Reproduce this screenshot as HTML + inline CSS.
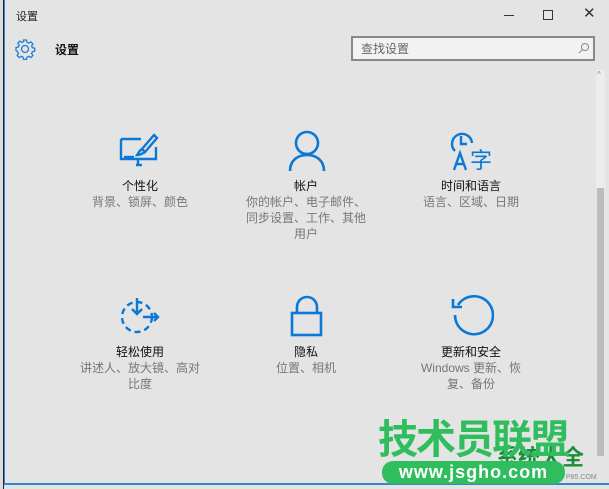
<!DOCTYPE html>
<html><head><meta charset="utf-8"><style>
*{margin:0;padding:0;box-sizing:border-box}
body{width:609px;height:489px;overflow:hidden;background:#e4e4e4;position:relative;font-family:"Liberation Sans","Noto Sans CJK SC",sans-serif}
.abs{position:absolute}
.item{position:absolute;width:160px;text-align:center}
.lab{font-size:12px;color:#111;line-height:16px}
.desc{font-size:12px;color:#777;line-height:16px}
svg{position:absolute}
</style></head><body>
<div class="abs" style="left:0;top:0;width:4px;height:489px;background:#dcdcdc"></div>
<div class="abs" style="left:3px;top:0;width:1px;height:489px;background:#1a2233"></div>
<div class="abs" style="left:4px;top:0;width:1px;height:484px;background:#3b82d0"></div>
<div class="abs" style="left:4px;top:483px;width:605px;height:2px;background:#3b82d0"></div>
<div class="abs" style="left:16px;top:8px;font-size:11px;color:#222">设置</div>
<div class="abs" style="left:504px;top:15px;width:10px;height:1px;background:#333"></div>
<div class="abs" style="left:543px;top:10px;width:10px;height:10px;border:1px solid #333"></div>
<div class="abs" style="left:583px;top:4px;font-size:15px;color:#333">✕</div>
<svg style="left:14px;top:38px" width="22" height="22" viewBox="0 0 22 22"><g fill="none" stroke="#1e7fd8" stroke-width="1.3"><circle cx="11" cy="11" r="3.5"/><path d="M9.5 2h3l.5 2.3 1.8.8 2-1.3 2.1 2.1-1.3 2 .8 1.8 2.3.5v3l-2.3.5-.8 1.8 1.3 2-2.1 2.1-2-1.3-1.8.8-.5 2.3h-3l-.5-2.3-1.8-.8-2 1.3-2.1-2.1 1.3-2-.8-1.8L2 12.5v-3l2.3-.5.8-1.8-1.3-2 2.1-2.1 2 1.3 1.8-.8z"/></g></svg>
<div class="abs" style="left:55px;top:41px;font-size:12px;font-weight:bold;color:#111">设置</div>
<div class="abs" style="left:351px;top:36px;width:244px;height:25px;border:2px solid #888;background:#f2f2f2"></div>
<div class="abs" style="left:361px;top:40px;font-size:12px;color:#666">查找设置</div>
<svg style="left:578px;top:42px" width="12" height="12"><circle cx="7" cy="5" r="3.5" fill="none" stroke="#888"/><path d="M4.5 7.5L1 11" stroke="#888"/></svg>
<div class="abs" style="left:596px;top:70px;width:9px;height:118px;background:#ececec"></div>
<div class="abs" style="left:597px;top:188px;width:7px;height:268px;background:#bcbcbc"></div>
<div class="abs" style="left:597px;top:70px;font-size:8px;color:#888">^</div>

<svg style="left:118px;top:133px" width="44" height="40"><g fill="none" stroke="#0a78d7" stroke-width="2.4"><path d="M3 6h20M3 6v20h35V14"/><path d="M18 32h6M20 27v5"/><path d="M36 2l-12 14 3 3 12-14z"/><path d="M24 16c-2 1-3 3-5 6 4 0 6-2 8-3"/><path d="M6 24h10"/></g></svg>
<div class="item" style="left:60px;top:178px"><div class="lab">个性化</div><div class="desc">背景、锁屏、颜色</div></div>

<svg style="left:287px;top:130px" width="40" height="42"><g fill="none" stroke="#0a78d7" stroke-width="2.6"><circle cx="20" cy="13" r="11"/><path d="M3 41c0-10 7-16 17-16s17 6 17 16"/></g></svg>
<div class="item" style="left:226px;top:178px"><div class="lab">帐户</div><div class="desc">你的帐户、电子邮件、<br>同步设置、工作、其他<br>用户</div></div>

<svg style="left:450px;top:130px" width="46" height="42"><g fill="none" stroke="#0a78d7" stroke-width="2.4"><path d="M5 21A10 10 0 1 1 22 13"/><path d="M11 6v8h6"/><path d="M4 40l6-17 6 17M6 34h8"/></g><text x="20" y="38" font-size="22" fill="#0a78d7" font-family="Noto Sans CJK SC">字</text></svg>
<div class="item" style="left:391px;top:178px"><div class="lab">时间和语言</div><div class="desc">语言、区域、日期</div></div>

<svg style="left:118px;top:296px" width="44" height="40"><g fill="none" stroke="#0a78d7" stroke-width="2.4"><circle cx="19" cy="21" r="15" stroke-dasharray="6 4"/><path d="M19 2v16M14 13l5 5 5-5M25 21h15M36 17l4 4-4 4"/></g></svg>
<div class="item" style="left:60px;top:344px"><div class="lab">轻松使用</div><div class="desc">讲述人、放大镜、高对<br>比度</div></div>

<svg style="left:290px;top:295px" width="34" height="42"><g fill="none" stroke="#0a78d7" stroke-width="2.6"><path d="M7 18V12a10 10 0 0 1 20 0v6"/><rect x="2" y="18" width="29" height="22"/></g></svg>
<div class="item" style="left:226px;top:344px"><div class="lab">隐私</div><div class="desc">位置、相机</div></div>

<svg style="left:450px;top:295px" width="44" height="42"><g fill="none" stroke="#0a78d7" stroke-width="2.6"><path d="M8 10A19 19 0 1 1 5 20"/><path d="M3 4v8h9" /></g></svg>
<div class="item" style="left:391px;top:344px"><div class="lab">更新和安全</div><div class="desc">Windows 更新、恢<br>复、备份</div></div>

<div class="abs" style="left:496px;top:440px;font-size:22px;font-weight:bold;color:#1a8c3a">系统大全</div>
<div class="abs" style="left:566px;top:474px;font-size:7px;color:#888">P85.COM</div>
<div class="abs" style="left:378px;top:418px;font-size:40px;font-weight:bold;color:#2fbd5e;letter-spacing:-2px;line-height:44px">技术员联盟</div>
<div class="abs" style="left:382px;top:461px;width:183px;height:23px;border-radius:11px;background:#2fbd5e;color:#fff;font-size:18px;font-weight:bold;text-align:center;line-height:23px;letter-spacing:1px">www.jsgho.com</div>
</body></html>
